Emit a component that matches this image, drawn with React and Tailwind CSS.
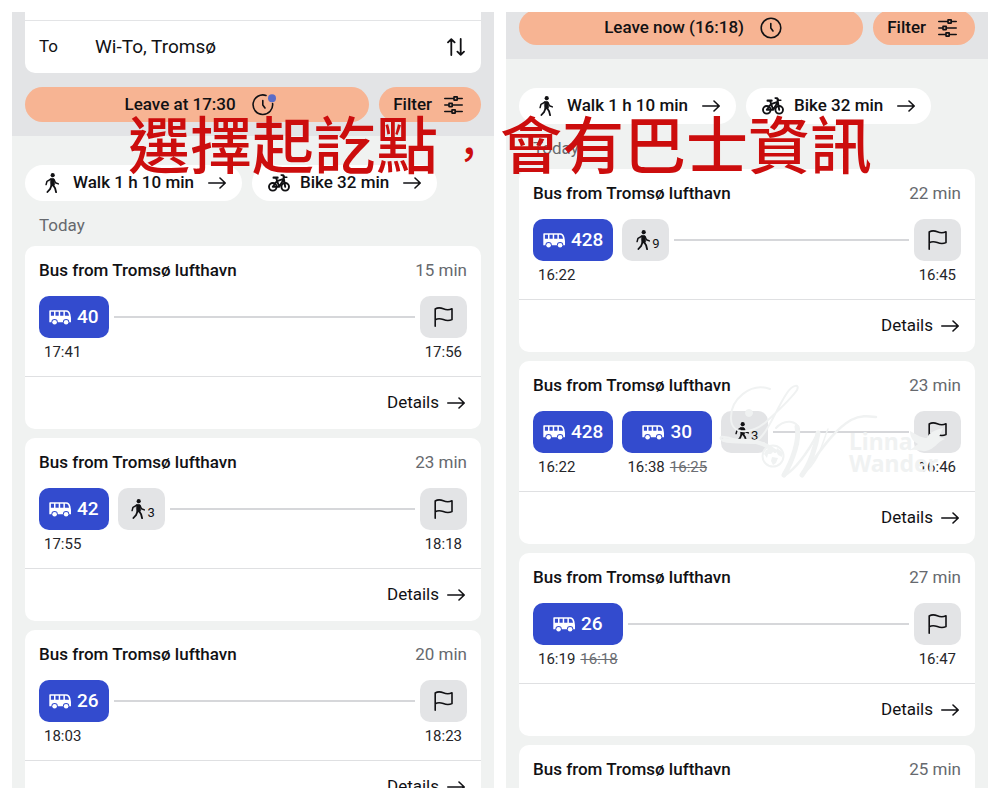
import React from "react";

const stroke = {
  fill: "none",
  stroke: "currentColor",
  strokeWidth: 1.6,
  strokeLinecap: "round",
  strokeLinejoin: "round",
};

function Arrow() {
  return (
    <svg viewBox="0 0 18 12" className="h-3 w-[18px] shrink-0" {...stroke} aria-hidden="true">
      <path d="M0.8 6H17M12 1l5.2 5L12 11" />
    </svg>
  );
}

function WalkIcon() {
  return (
    <svg viewBox="0 0 14 20" className="h-5 w-3.5 shrink-0" {...stroke} aria-hidden="true">
      <circle cx="7.7" cy="2.2" r="2.1" fill="currentColor" stroke="none" />
      <path d="M5.4 5.6Q7.2 4.6 9 5.8L9.6 11.4 8.6 12.9H6L5.6 11Z" fill="currentColor" strokeWidth="0.6" />
      <path d="M5.4 6.3L2 8.3 1.1 11.6M9 6.5l1.5 3.2 2.9 1.2" strokeWidth="1.5" />
      <path d="M6.5 12.4L5.2 15.8 2.4 19M8.2 12.2l1.9 3 1 4" strokeWidth="1.8" />
    </svg>
  );
}

function BikeIcon() {
  return (
    <svg viewBox="0 0 22 18" className="h-[18px] w-[22px] shrink-0" {...stroke} aria-hidden="true">
      <circle cx="4.8" cy="12.8" r="3.8" strokeWidth="1.9" />
      <circle cx="17.2" cy="12.8" r="3.8" strokeWidth="1.9" />
      <path d="M5.6 3.7h4" strokeWidth="2.2" />
      <path d="M13.2 1.1h2.2l1.2 2.2h2.2" strokeWidth="1.6" />
      <path d="M15.4 2l1.8 10.8M8.2 4.2l3 8.6 4.6-7.6M9 7.2l6.6-2.4M4.8 12.8L8.8 7.2M4.8 12.8h6.4" strokeWidth="1.9" />
    </svg>
  );
}

function BusIcon() {
  return (
    <svg viewBox="0 0 22 15" className="h-[15px] w-[22px] shrink-0" aria-hidden="true">
      <path
        fill="currentColor"
        fillRule="evenodd"
        d="M1 0.3H17.2C19.6 0.3 21 2 21.4 4.3L22 8V12.2H20.3A3.2 3.2 0 0 0 13.9 12.2H8.8A3.2 3.2 0 0 0 2.4 12.2H0.3V1Q0.3 0.3 1 0.3ZM1.9 1.8V5.8H5V1.8ZM6.5 1.8V5.8H9.7V1.8ZM11.2 1.8V5.8H14.4V1.8ZM15.9 1.8V5.8H20C19.7 3.4 18.7 1.8 17 1.8Z"
      />
      <circle cx="5.6" cy="12.2" r="2.3" fill="currentColor" />
      <circle cx="17.1" cy="12.2" r="2.3" fill="currentColor" />
    </svg>
  );
}

function FlagIcon() {
  return (
    <svg viewBox="0 0 19 20" className="h-5 w-[19px]" {...stroke} aria-hidden="true">
      <path d="M1.2 19.2V2C4 .3 6.5.6 9.3 1.8S15 3.2 18 1.8V12.6C15 14 12.5 13.8 9.3 12.6S4 11.2 1.2 12.8" />
    </svg>
  );
}

function FilterIcon() {
  return (
    <svg viewBox="0 0 19 20" className="h-5 w-[19px] shrink-0" {...stroke} aria-hidden="true">
      <path d="M.8 3.5H9.5M13.5 3.5H18.2M.8 10H4.5M8.5 10H18.2M.8 16.5H7.5M11.5 16.5H18.2" />
      <rect x="10" y="1.9" width="3.2" height="3.2" />
      <rect x="5" y="8.4" width="3.2" height="3.2" />
      <rect x="8" y="14.9" width="3.2" height="3.2" />
    </svg>
  );
}

function ClockIcon({ dot }) {
  return (
    <svg viewBox="0 0 24 22" className="h-[22px] w-6 shrink-0" {...stroke} aria-hidden="true">
      {dot ? (
        <>
          <path d="M14 1.4A9.8 9.8 0 1 0 20.6 9.5" />
          <circle cx="20" cy="4.2" r="4" fill="#5a6cc8" stroke="none" />
        </>
      ) : (
        <circle cx="11" cy="11" r="9.8" />
      )}
      <path d="M10.8 6.5V11l2.2 3" />
    </svg>
  );
}

function SwapIcon() {
  return (
    <svg viewBox="0 0 18 18" className="h-[18px] w-[18px]" {...stroke} strokeWidth="1.8" aria-hidden="true">
      <path d="M4.3 17V1.2M1 4.4L4.3 1.1 7.6 4.4M13.7 1V16.8M10.4 13.6l3.3 3.3 3.3-3.3" />
    </svg>
  );
}

function Controls({ label, dot }) {
  return (
    <div className="flex gap-2.5 font-medium">
      <button className="flex h-[35px] flex-1 items-center justify-center gap-4 rounded-full bg-[#f7b493] pl-1.5">
        {label}
        <ClockIcon dot={dot} />
      </button>
      <button className="flex h-[35px] items-center gap-3 rounded-full bg-[#f7b493] pr-[18px] pl-3.5">
        Filter
        <FilterIcon />
      </button>
    </div>
  );
}

function Chip({ icon, children }) {
  return (
    <button className="flex h-9 items-center gap-2.5 rounded-full bg-white px-4 font-medium">
      <span className="flex w-[22px] justify-center">{icon}</span>
      {children}
      <span className="ml-1">
        <Arrow />
      </span>
    </button>
  );
}

function Stop({ stop }) {
  if (stop.walk) {
    return (
      <div className="flex h-[42px] w-[47px] items-center justify-center gap-0.5 rounded-[10px] bg-[#e3e4e6] pl-1">
        <WalkIcon />
        <span className="pt-2 text-[13px]">{stop.walk}</span>
      </div>
    );
  }
  return (
    <div>
      <div className="flex h-[42px] items-center justify-center gap-1.5 rounded-[10px] bg-[#334bce] px-2.5 text-[19px] font-medium text-white">
        <BusIcon />
        {stop.line}
      </div>
      <div className="mt-1 flex gap-[5px] px-[5px] text-[15px] leading-5 text-[#26262a]">
        <span>{stop.time}</span>
        {stop.was && <s className="text-[#6b6e73]">{stop.was}</s>}
      </div>
    </div>
  );
}

function Watermark() {
  return (
    <div className="pointer-events-none absolute top-5 right-0 h-[104px] w-64 text-[#f0f2f2]" aria-hidden="true">
      <svg viewBox="0 0 256 104" className="h-[104px] w-64" fill="none" stroke="currentColor" strokeLinecap="round">
        <path
          strokeWidth="2"
          d="M51 8C32 1 11 18 12 38C13 56 35 52 48 40C62 27 72 18 78 9C81 3 74 3 68 12C57 28 50 50 40 58C28 66 8 54 2 56C-2 62 25 62 45 62"
        />
        <path strokeWidth="4" d="M5 59C22 62 36 55 56 70" />
        <circle cx="30" cy="32" r="3.5" fill="currentColor" />
        <circle cx="54" cy="75" r="10.5" strokeWidth="2" />
        <path fill="currentColor" stroke="none" d="M47 69l6-3 3 3-4 4-3 0-1 4-3-4zM58 67l5 4 0 5-4-2-2-4zM53 76l6 1-2 5-3 2-2-4z" />
        <path strokeWidth="2" d="M57 47C66 37 78 40 80 48C81 59 73 80 64 95" />
        <path strokeWidth="5" d="M78 46C81 58 74 79 65 94" />
        <path strokeWidth="2.5" d="M65 95C78 87 90 69 99 52" />
        <path strokeWidth="5" d="M99 52C97 66 91 83 83 94" />
        <path strokeWidth="2.5" d="M83 94C99 74 113 50 132 39C142 34 149 35 157 36" />
        <path strokeWidth="1.5" d="M84 93C101 80 104 59 109 48" />
        <path
          fill="currentColor"
          stroke="none"
          d="M191 50C200 55 203 57 208 57C210 51 217 49 224 47L220 56 226 58C218 61 216 68 207 70C201 71 197 67 190 70L199 63C193 60 191 55 191 50Z"
        />
      </svg>
      <div className="absolute top-[49px] left-[130px] font-['Noto_Sans',sans-serif] text-[23px] leading-[22px] font-bold">
        Linna
        <br />
        Wander
      </div>
    </div>
  );
}

function Trip({ trip }) {
  return (
    <article className="relative h-[183px] shrink-0 rounded-[10px] bg-white">
      <div className="h-[131px] border-b border-[#dfe0e2] px-3.5 pt-3">
        <div className="flex items-center justify-between leading-6">
          <h3 className="font-medium">Bus from Tromsø lufthavn</h3>
          <span className="text-[#66696e]">{trip.duration} min</span>
        </div>
        {trip.stops && (
          <div className="mt-3.5 flex gap-[5px]">
            <div className="flex gap-[9px]">
              {trip.stops.map((stop, i) => (
                <Stop key={i} stop={stop} />
              ))}
            </div>
            <div className="mt-5 h-0.5 flex-1 bg-[#d6d7da]" />
            <div>
              <div className="flex h-[42px] w-[47px] items-center justify-center rounded-[10px] bg-[#e3e4e6]">
                <FlagIcon />
              </div>
              <div className="mt-1 px-[5px] text-[15px] leading-5 text-[#26262a]">{trip.arrive}</div>
            </div>
          </div>
        )}
      </div>
      <div className="flex h-[52px] items-center justify-end px-4">
        <a href="#details" className="flex items-center gap-2">
          Details
          <Arrow />
        </a>
      </div>
      {trip.marked && <Watermark />}
    </article>
  );
}

function Results({ trips }) {
  return (
    <div className="flex flex-col px-[13px] pt-[29px]">
      <div className="flex gap-2.5">
        <Chip icon={<WalkIcon />}>Walk 1 h 10 min</Chip>
        <Chip icon={<BikeIcon />}>Bike 32 min</Chip>
      </div>
      <h2 className="mt-3.5 mb-[11px] px-3.5 leading-5 text-[#66696e]">Today</h2>
      <div className="flex flex-col gap-[9px]">
        {trips.map((trip, i) => (
          <Trip key={i} trip={trip} />
        ))}
      </div>
    </div>
  );
}

const evening = [
  { duration: 15, arrive: "17:56", stops: [{ line: "40", time: "17:41" }] },
  { duration: 23, arrive: "18:18", stops: [{ line: "42", time: "17:55" }, { walk: 3 }] },
  { duration: 20, arrive: "18:23", stops: [{ line: "26", time: "18:03" }] },
];

const afternoon = [
  { duration: 22, arrive: "16:45", stops: [{ line: "428", time: "16:22" }, { walk: 9 }] },
  {
    duration: 23,
    arrive: "16:46",
    marked: true,
    stops: [{ line: "428", time: "16:22" }, { line: "30", time: "16:38", was: "16:25" }, { walk: 3 }],
  },
  { duration: 27, arrive: "16:47", stops: [{ line: "26", time: "16:19", was: "16:18" }] },
  { duration: 25 },
];

export default function App() {
  return (
    <main className="relative grid h-screen grid-cols-2 gap-3 overflow-hidden bg-white p-3 font-[Roboto,sans-serif] text-[17px] text-[#111114]">
      <section className="min-w-0 overflow-hidden bg-[#f0f2f1]">
        <header className="bg-[#e3e4e6] px-[13px] pb-3.5">
          <div className="mb-3.5 rounded-b-[10px] bg-white pt-2">
            <div className="flex h-[53px] items-center border-t border-[#e3e4e6] pr-4 pl-3.5">
              <label htmlFor="destination" className="w-14">
                To
              </label>
              <input
                id="destination"
                className="min-w-0 flex-1 bg-transparent text-[19px] outline-none"
                defaultValue="Wi-To, Tromsø"
              />
              <button aria-label="Swap start and destination">
                <SwapIcon />
              </button>
            </div>
          </div>
          <Controls label="Leave at 17:30" dot />
        </header>
        <Results trips={evening} />
      </section>

      <section className="min-w-0 overflow-hidden bg-[#f0f2f1]">
        <header className="-mt-0.5 bg-[#e3e4e6] px-[13px] pb-3.5">
          <Controls label="Leave now (16:18)" />
        </header>
        <Results trips={afternoon} />
      </section>

      <h1
        lang="zh-TW"
        className="pointer-events-none absolute inset-x-0 top-[108px] text-center font-['Noto_Sans_CJK_TC',sans-serif] text-[62px] leading-[68px] font-medium whitespace-nowrap text-[#cc0d0d]"
      >
        選擇起訖點<span className="inline-block w-[62px] text-[40px]">，</span>會有巴士資訊
      </h1>
    </main>
  );
}
